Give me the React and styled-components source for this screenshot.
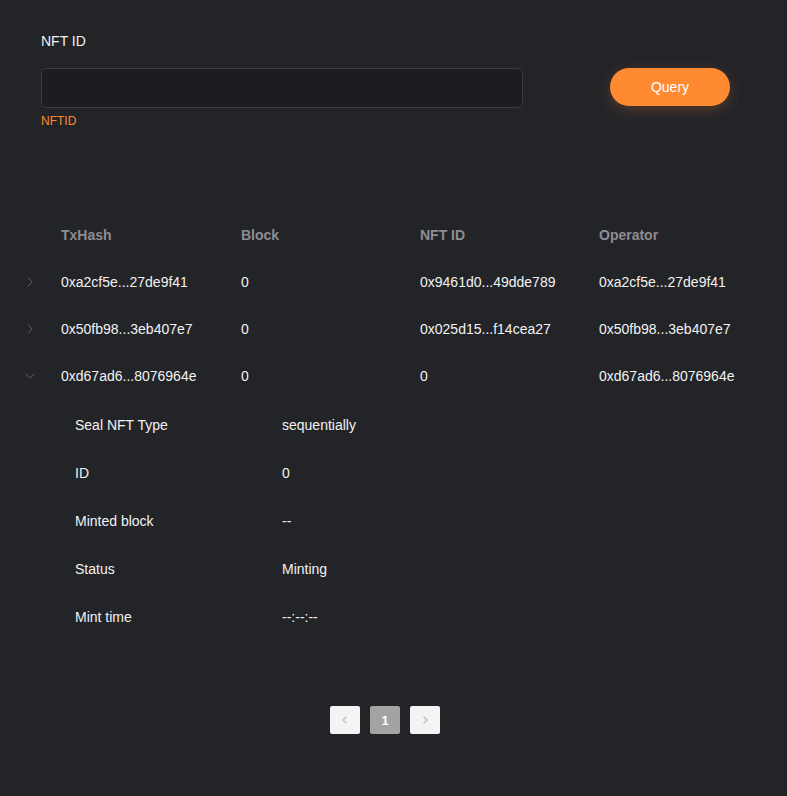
import React, { useState } from 'react';
import styled, { createGlobalStyle } from 'styled-components';

const GlobalStyle = createGlobalStyle`
  html, body {
    margin: 0;
    padding: 0;
    background: #232428;
  }
  body {
    font-family: "Liberation Sans", Arial, sans-serif;
    color: #ececec;
  }
`;

const Page = styled.div`
  min-height: 796px;
  background: #232428;
  padding-top: 32px;
  box-sizing: border-box;
`;

const QueryForm = styled.form`
  padding: 0 41px;
  display: flex;
  flex-direction: column;
`;

const Label = styled.label`
  font-size: 14px;
  line-height: 18px;
  color: #f0f0f0;
  margin-bottom: 18px;
`;

const FieldRow = styled.div`
  display: flex;
  align-items: flex-start;
`;

const Field = styled.div`
  display: flex;
  flex-direction: column;
  width: 482px;
`;

const Input = styled.input`
  box-sizing: border-box;
  height: 40px;
  width: 100%;
  background: #1c1d21;
  border: 1px solid #3b3c42;
  border-radius: 5px;
  color: #eee;
  font-size: 14px;
  padding: 0 12px;
  outline: none;
`;

const Helper = styled.div`
  font-size: 12px;
  line-height: 14px;
  margin-top: 6px;
  color: #ff8a32;
`;

const QueryButton = styled.button`
  margin-left: 87px;
  width: 120px;
  height: 38px;
  border: none;
  border-radius: 19px;
  background: #ff8a32;
  color: #fff;
  font-family: "Liberation Sans", Arial, sans-serif;
  font-size: 14px;
  cursor: pointer;
  box-shadow: 0 4px 14px rgba(255, 138, 50, 0.22);
`;

const Table = styled.div`
  margin-top: 83px;
  padding-left: 13px;
`;

const Row = styled.div`
  display: grid;
  grid-template-columns: 48px 180px 179px 179px 1fr;
  align-items: center;
  height: 47px;
  font-size: 14px;
  color: ${p => (p.$head ? '#8c8d92' : '#f2f2f2')};
  font-weight: ${p => (p.$head ? 700 : 400)};
  cursor: ${p => (p.$head ? 'default' : 'pointer')};
`;

const Toggle = styled.span`
  display: flex;
  align-items: center;
  padding-left: 11px;
  svg {
    display: block;
  }
`;

const Details = styled.div`
  padding: 2px 0 18px 62px;
`;

const DetailRow = styled.div`
  display: grid;
  grid-template-columns: 207px 1fr;
  align-items: center;
  height: 48px;
  font-size: 14px;
  color: #f2f2f2;
`;

const Pager = styled.div`
  display: flex;
  justify-content: center;
  gap: 10px;
  margin-top: 47px;
  padding-right: 17px;
`;

const PageBtn = styled.button`
  width: 30px;
  height: 28px;
  border: none;
  border-radius: 2px;
  display: flex;
  align-items: center;
  justify-content: center;
  padding: 0;
  font-family: "Liberation Sans", Arial, sans-serif;
  font-size: 13px;
  font-weight: 700;
  background: ${p => (p.$active ? '#a3a3a3' : '#f4f4f5')};
  color: ${p => (p.$active ? '#ffffff' : '#c0c4cc')};
`;

const Chevron = ({ open }) => (
  <svg width="12" height="12" viewBox="0 0 12 12">
    <path
      d={open ? 'M1.5 4 L6 8 L10.5 4' : 'M4 1.5 L8 6 L4 10.5'}
      fill="none"
      stroke="#5f6066"
      strokeWidth="1"
    />
  </svg>
);

const rows = [
  { hash: '0xa2cf5e...27de9f41', block: '0', nft: '0x9461d0...49dde789', op: '0xa2cf5e...27de9f41' },
  { hash: '0x50fb98...3eb407e7', block: '0', nft: '0x025d15...f14cea27', op: '0x50fb98...3eb407e7' },
  { hash: '0xd67ad6...8076964e', block: '0', nft: '0', op: '0xd67ad6...8076964e' },
];

const details = [
  ['Seal NFT Type', 'sequentially'],
  ['ID', '0'],
  ['Minted block', '--'],
  ['Status', 'Minting'],
  ['Mint time', '--:--:--'],
];

const App = () => {
  const [open, setOpen] = useState(2);
  const [nftId, setNftId] = useState('');

  return (
    <Page>
      <GlobalStyle />
      <QueryForm onSubmit={e => e.preventDefault()}>
        <Label htmlFor="nftid">NFT ID</Label>
        <FieldRow>
          <Field>
            <Input id="nftid" value={nftId} onChange={e => setNftId(e.target.value)} />
            <Helper>NFTID</Helper>
          </Field>
          <QueryButton type="submit">Query</QueryButton>
        </FieldRow>
      </QueryForm>

      <Table>
        <Row $head>
          <span />
          <span>TxHash</span>
          <span>Block</span>
          <span>NFT ID</span>
          <span>Operator</span>
        </Row>
        {rows.map((r, i) => (
          <React.Fragment key={r.hash}>
            <Row onClick={() => setOpen(open === i ? -1 : i)}>
              <Toggle>
                <Chevron open={open === i} />
              </Toggle>
              <span>{r.hash}</span>
              <span>{r.block}</span>
              <span>{r.nft}</span>
              <span>{r.op}</span>
            </Row>
            {open === i && (
              <Details>
                {details.map(([k, v]) => (
                  <DetailRow key={k}>
                    <span>{k}</span>
                    <span>{v}</span>
                  </DetailRow>
                ))}
              </Details>
            )}
          </React.Fragment>
        ))}
      </Table>

      <Pager>
        <PageBtn>
          <svg width="10" height="10" viewBox="0 0 10 10">
            <path d="M6.5 1.5 L3 5 L6.5 8.5" fill="none" stroke="#c0c4cc" strokeWidth="1.6" />
          </svg>
        </PageBtn>
        <PageBtn $active>1</PageBtn>
        <PageBtn>
          <svg width="10" height="10" viewBox="0 0 10 10">
            <path d="M3.5 1.5 L7 5 L3.5 8.5" fill="none" stroke="#c0c4cc" strokeWidth="1.6" />
          </svg>
        </PageBtn>
      </Pager>
    </Page>
  );
};

export default App;
